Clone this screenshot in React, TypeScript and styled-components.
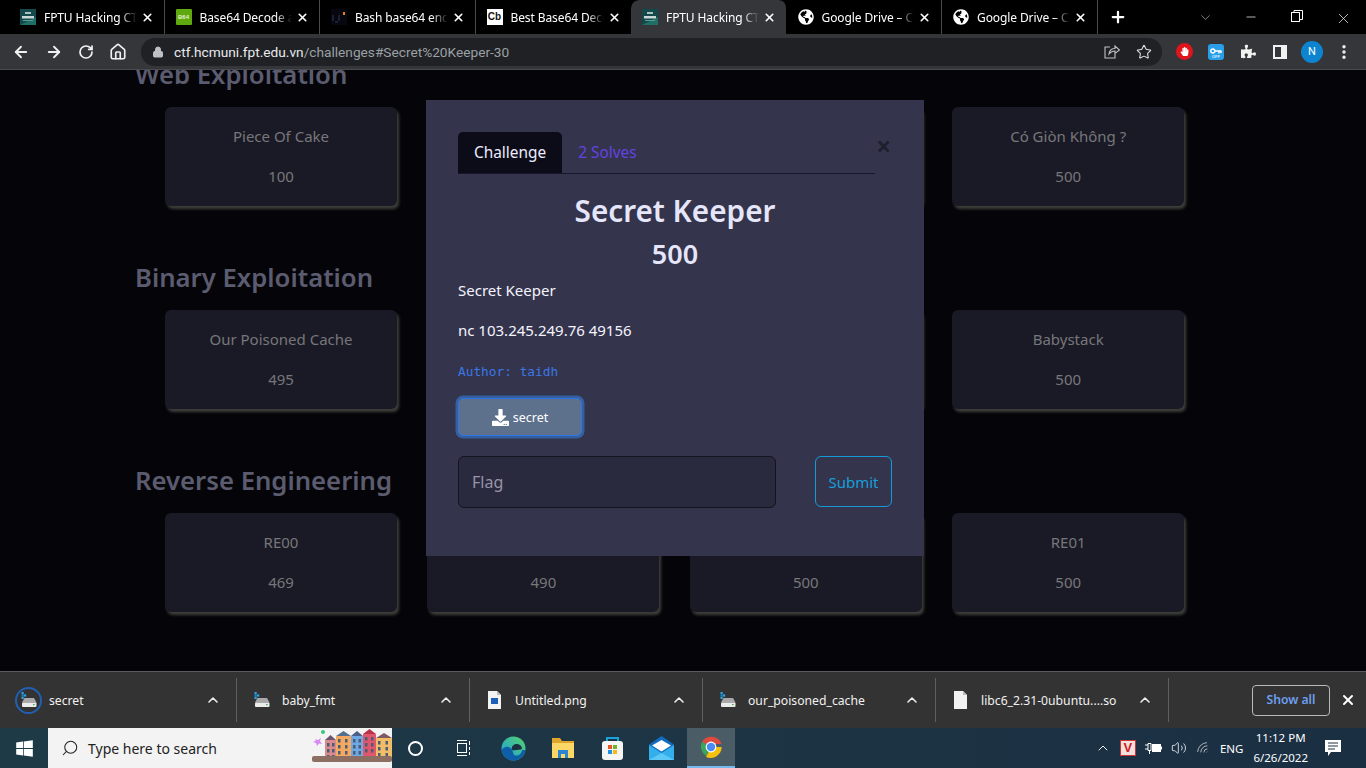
import React from "react";
import styled, { createGlobalStyle } from "styled-components";
import {
  ArrowLeft,
  ArrowRight,
  RotateCw,
  Home,
  Lock,
  Star,
  X,
  Plus,
  ChevronDown,
  ChevronUp,
  Minus,
  MoreVertical,
  Search,
  Volume2,
  Wifi,
} from "lucide-react";
import { FaDownload, FaGlobeAmericas, FaPuzzlePiece, FaWindows, FaHandPaper } from "react-icons/fa";

const uiFont = `"Noto Sans", "Open Sans", sans-serif`;

const GlobalStyle = createGlobalStyle`
  html, body {
    margin: 0;
    padding: 0;
    height: 100%;
    overflow: hidden;
    background: #050509;
    font-family: ${uiFont};
  }
  * { box-sizing: border-box; }
`;

const TabIcon: React.FC<{ kind: string }> = ({ kind }) => {
  if (kind === "ctf") {
    return (
      <svg width="16" height="16" viewBox="0 0 16 16">
        <rect width="16" height="16" fill="#14494c" />
        <path d="M0 16L16 8v8z" fill="#1f6f66" />
        <rect x="5" y="3" width="6" height="2" fill="#aebfc0" />
        <rect x="2" y="7" width="12" height="2.5" fill="#c9d6d6" />
        <rect x="3" y="11" width="10" height="1" fill="#5c9b94" />
      </svg>
    );
  }
  if (kind === "b64") {
    return <B64>B64</B64>;
  }
  if (kind === "bash") {
    return (
      <svg width="16" height="16" viewBox="0 0 16 16">
        <rect width="16" height="16" fill="#07070f" />
        <path d="M2 6v6M8 6v6M4 13h3" stroke="#252a45" strokeWidth="1.5" />
        <rect x="12" y="3" width="2" height="3" fill="#e8782a" />
      </svg>
    );
  }
  if (kind === "cb") {
    return <Cb>Cb</Cb>;
  }
  return <FaGlobeAmericas size={16} color="#fff" />;
};

const tabs = [
  { icon: "ctf", title: "FPTU Hacking CTF" },
  { icon: "b64", title: "Base64 Decode and Encode" },
  { icon: "bash", title: "Bash base64 encode" },
  { icon: "cb", title: "Best Base64 Decode" },
  { icon: "ctf", title: "FPTU Hacking CTF", active: true },
  { icon: "globe", title: "Google Drive – Cloud" },
  { icon: "globe", title: "Google Drive – Cloud" },
];

const sections = [
  {
    name: "Web Exploitation",
    cards: [
      { title: "Piece Of Cake", points: "100" },
      { title: "", points: "" },
      { title: "", points: "" },
      { title: "Có Giòn Không ?", points: "500" },
    ],
  },
  {
    name: "Binary Exploitation",
    cards: [
      { title: "Our Poisoned Cache", points: "495" },
      { title: "", points: "" },
      { title: "", points: "" },
      { title: "Babystack", points: "500" },
    ],
  },
  {
    name: "Reverse Engineering",
    cards: [
      { title: "RE00", points: "469" },
      { title: "", points: "490" },
      { title: "", points: "500" },
      { title: "RE01", points: "500" },
    ],
  },
];

const downloads = [
  { name: "secret", kind: "bin", progress: true },
  { name: "baby_fmt", kind: "bin" },
  { name: "Untitled.png", kind: "png" },
  { name: "our_poisoned_cache", kind: "bin" },
  { name: "libc6_2.31-0ubuntu....so", kind: "file" },
];

const FileIcon: React.FC<{ kind: string }> = ({ kind }) => {
  if (kind === "bin") {
    return (
      <svg width="16" height="16" viewBox="0 0 16 16">
        <rect x="0.5" y="0" width="2.2" height="2.2" fill="#29a8e8" />
        <rect x="3" y="2.4" width="2.2" height="2.2" fill="#29a8e8" />
        <rect x="0.5" y="2.4" width="2.2" height="2.2" fill="#1d86c8" />
        <rect x="0.5" y="4.8" width="2.2" height="2.2" fill="#29a8e8" />
        <path d="M3.5 6h9.5l2.5 4.5H1z" fill="#a9a9a9" />
        <rect x="1" y="10.5" width="14.5" height="4.5" rx="1" fill="#ececec" />
        <rect x="12" y="12" width="1.6" height="1.2" fill="#37b24d" />
      </svg>
    );
  }
  return (
    <svg width="13" height="18" viewBox="0 0 13 18">
      <path d="M0 0h9l4 4v14H0z" fill="#f2f2f2" />
      <path d="M9 0l4 4H9z" fill="#bbb" />
      {kind === "png" && <rect x="3" y="7" width="7" height="6" fill="#1d5fb8" />}
    </svg>
  );
};

const houses = [
  { x: 13, w: 11, top: 12, fill: "#d98a8c", roof: "#6d5570" },
  { x: 24, w: 15, top: 8, fill: "#f4a860", roof: "#54708c" },
  { x: 39, w: 12, top: 8, fill: "#6fa9e4", roof: "#4b5f88" },
  { x: 51, w: 13, top: 6, fill: "#e0566c", roof: "#b83248" },
  { x: 64, w: 16, top: 10, fill: "#f2bd68", roof: "#7d5a64" },
];

const SearchIllustration: React.FC = () => (
  <svg width="80" height="40" viewBox="0 0 80 40">
    <circle cx="11" cy="4" r="2" fill="#35c77e" />
    <path d="M3 11l3 1 3-2-1 3 2 3-3-.5-2 2.5-1-3-3-1 3-1.5z" fill="#d78af0" />
    {houses.map((h) => (
      <g key={h.x}>
        <rect x={h.x} y={h.top} width={h.w} height={29 - h.top} fill={h.fill} />
        <path d={`M${h.x} ${h.top}l${h.w / 2} -5 ${h.w / 2} 5z`} fill={h.roof} />
        {[0, 1, 2].map((row) =>
          [0, 1].map((col) => (
            <rect
              key={`${row}-${col}`}
              x={h.x + 2 + col * (h.w / 2 - 0.5)}
              y={h.top + 3 + row * 6}
              width="2.5"
              height="3.5"
              fill="#4a5d74"
            />
          )),
        )}
      </g>
    ))}
    <rect x="0" y="28" width="80" height="6" rx="2" fill="#8c6e62" />
  </svg>
);

const App: React.FC = () => {
  return (
    <Screen>
      <GlobalStyle />
      <TabStrip>
        {tabs.map((tab, i) => (
          <Tab key={i} $active={!!tab.active}>
            <TabIconBox>
              <TabIcon kind={tab.icon} />
            </TabIconBox>
            <TabTitle>{tab.title}</TabTitle>
            <X size={13} strokeWidth={3} color="#fff" />
          </Tab>
        ))}
        <NewTab>
          <Plus size={18} strokeWidth={3} color="#fff" />
        </NewTab>
        <WindowControls>
          <WindowButton>
            <ChevronDown size={15} strokeWidth={1} color="#ccc" />
          </WindowButton>
          <WindowButton>
            <Minus size={14} strokeWidth={1.2} color="#fff" />
          </WindowButton>
          <WindowButton>
            <svg width="12" height="12" viewBox="0 0 12 12" fill="none" stroke="#fff">
              <rect x="0.5" y="2.5" width="8" height="9" />
              <path d="M3 2.5V.5h8.5v9H8.5" />
            </svg>
          </WindowButton>
          <WindowButton>
            <X size={17} strokeWidth={1} color="#fff" />
          </WindowButton>
        </WindowControls>
      </TabStrip>

      <Toolbar>
        <NavIcons>
          <ArrowLeft size={18} strokeWidth={2.4} color="#f1f1f1" />
          <ArrowRight size={18} strokeWidth={2.4} color="#f1f1f1" />
          <RotateCw size={16} strokeWidth={2.6} color="#f1f1f1" />
          <Home size={18} strokeWidth={2.2} color="#f1f1f1" />
        </NavIcons>
        <Omnibox>
          <Lock size={12} color="#bdc1c6" fill="#bdc1c6" />
          <Url>
            ctf.hcmuni.fpt.edu.vn<UrlRest>/challenges#Secret%20Keeper-30</UrlRest>
          </Url>
          <OmniActions>
            <svg width="16" height="15" viewBox="0 0 16 15" fill="none" stroke="#bdc1c6" strokeWidth="1.1">
              <path d="M6 3H1v11h10v-4" />
              <path d="M5 10c.5-4 3-5.5 6-5.5V2l4.5 4L11 9.500V7C8.500 7 6.500 8 5 10z" />
            </svg>
            <Star size={16} strokeWidth={1.6} color="#e0e0e0" />
          </OmniActions>
        </Omnibox>
        <Extensions>
          <StopSign>
            <FaHandPaper size={9} color="#fff" />
          </StopSign>
          <KeyBadge>
            <svg width="12" height="6" viewBox="0 0 12 6" fill="none" stroke="#fff" strokeWidth="1.4">
              <circle cx="2.800" cy="3" r="2" />
              <path d="M5 3h6.500M9 3v2.500M11 3v2" />
            </svg>
            <KeyLabel>OFF</KeyLabel>
          </KeyBadge>
          <FaPuzzlePiece size={15} color="#f1f1f1" />
          <SidePanelIcon />
          <Avatar>N</Avatar>
          <MoreVertical size={18} strokeWidth={2.6} color="#f1f1f1" />
        </Extensions>
      </Toolbar>

      <Page>
        <Board>
          {sections.map((section) => (
            <Section key={section.name}>
              <SectionTitle>{section.name}</SectionTitle>
              <CardGrid>
                {section.cards.map((card, i) => (
                  <Card key={i}>
                    <CardTitle>{card.title}</CardTitle>
                    <CardPoints>{card.points}</CardPoints>
                  </Card>
                ))}
              </CardGrid>
            </Section>
          ))}
        </Board>

        <Modal>
          <CloseMark>×</CloseMark>
          <ModalTabs>
            <ModalTab $active>Challenge</ModalTab>
            <ModalTab>2 Solves</ModalTab>
          </ModalTabs>
          <ChallengeName>Secret Keeper</ChallengeName>
          <ChallengeValue>500</ChallengeValue>
          <Description>Secret Keeper</Description>
          <Description>nc 103.245.249.76 49156</Description>
          <Author>Author: taidh</Author>
          <FileButton>
            <FaDownload size={17} />
            secret
          </FileButton>
          <FlagRow>
            <FlagInput placeholder="Flag" />
            <SubmitButton>Submit</SubmitButton>
          </FlagRow>
        </Modal>
      </Page>

      <DownloadBar>
        {downloads.map((d) => (
          <DownloadItem key={d.name}>
            <DownloadIcon $progress={!!d.progress}>
              <FileIcon kind={d.kind} />
            </DownloadIcon>
            <DownloadName>{d.name}</DownloadName>
            <ChevronUp size={16} strokeWidth={2.4} color="#eee" />
          </DownloadItem>
        ))}
        <DownloadEnd>
          <ShowAll>Show all</ShowAll>
          <X size={16} strokeWidth={3} color="#fff" />
        </DownloadEnd>
      </DownloadBar>

      <Taskbar>
        <StartButton>
          <FaWindows size={19} color="#fff" />
        </StartButton>
        <SearchBox>
          <Search size={18} strokeWidth={1.4} color="#222" style={{ transform: "scaleX(-1)" }} />
          <SearchText>Type here to search</SearchText>
          <SearchArt>
            <SearchIllustration />
          </SearchArt>
        </SearchBox>
        <CortanaApp>
          <CortanaRing />
        </CortanaApp>
        <PinnedApp>
          <svg width="18" height="18" viewBox="0 0 18 18" fill="none" stroke="#fff">
            <rect x="2.5" y="4.500" width="9" height="9" />
            <path d="M2 1.500h10M2 16.500h10M14.500 2v4M14.500 8v3M14.500 13v3" />
          </svg>
        </PinnedApp>
        <PinnedApp>
          <svg width="25" height="25" viewBox="0 0 25 25">
            <defs>
              <linearGradient id="edgeTop" x1="0" y1="1" x2="1" y2="0">
                <stop offset="0" stopColor="#1b9de2" />
                <stop offset="1" stopColor="#56d36c" />
              </linearGradient>
            </defs>
            <circle cx="12.500" cy="12.500" r="12" fill="url(#edgeTop)" />
            <path d="M24.500 14c-1 6-6 10.500-12 10.500C6 24.500 2 20 .6 14c3-4 8-4 10-1 2 3 1 6 4 6.500 3 .5 6-2 6.500-5.500z" fill="#0f5fa8" />
            <path d="M11 14c-1-4 2-6.500 5.500-6 3 .5 4.500 2.500 4.500 5-2 1-7 1.500-10 1z" fill="#1d3240" />
          </svg>
        </PinnedApp>
        <PinnedApp>
          <svg width="24" height="22" viewBox="0 0 24 22">
            <path d="M1 1h8l2 3h12v16H1z" fill="#e0a62c" />
            <rect x="1" y="6" width="22" height="15" fill="#fad766" />
            <path d="M7 13h10v8h-3v-4h-4v4H7z" fill="#2a86d1" />
          </svg>
        </PinnedApp>
        <PinnedApp>
          <svg width="23" height="25" viewBox="0 0 23 25">
            <path d="M6 7V2h11v5" fill="none" stroke="#19a3d8" strokeWidth="2" />
            <rect x="1" y="5" width="21" height="19" rx="3" fill="#f5f5f5" />
            <rect x="7" y="9" width="4" height="4" fill="#e8562a" />
            <rect x="12" y="9" width="4" height="4" fill="#6fb52c" />
            <rect x="7" y="14" width="4" height="4" fill="#1b93e0" />
            <rect x="12" y="14" width="4" height="4" fill="#f5b81c" />
          </svg>
        </PinnedApp>
        <PinnedApp>
          <svg width="25" height="24" viewBox="0 0 25 24">
            <path d="M0 8.500L12.500 0 25 8.500V24H0z" fill="#0f6cc0" />
            <path d="M3 9.500L12.500 4 22 9.500l-9.500 6z" fill="#fff" />
            <path d="M0 9l12.500 8L25 9v15H0z" fill="#33b0ec" />
            <path d="M0 24l12.500-7L25 24z" fill="#5cc8f5" />
          </svg>
        </PinnedApp>
        <ChromeApp>
          <svg width="24" height="24" viewBox="0 0 24 24">
            <path d="M12 12L3 6.800A11 11 0 0 1 22.600 9H12z" fill="#dd4b3e" />
            <path d="M12 12l-5 8.900A11 11 0 0 1 3 6.800z" fill="#3ca55c" />
            <path d="M12 12h10.600A11 11 0 0 1 7 22z" fill="#f4c20d" />
            <circle cx="12" cy="12" r="5.400" fill="#fff" />
            <circle cx="12" cy="12" r="4.200" fill="#4a8af4" />
          </svg>
        </ChromeApp>
        <Tray>
          <ChevronUp size={16} strokeWidth={1.4} color="#fff" />
          <VBadge>V</VBadge>
          <svg width="17" height="14" viewBox="0 0 17 14" fill="none" stroke="#fff">
            <path d="M0 4h3M0 8h3M3 2.500h3v7H3zM4.500 9.500V13" />
            <rect x="7.500" y="3.500" width="8" height="7" fill="#fff" />
            <path d="M16.500 5.500v3" />
          </svg>
          <Volume2 size={16} strokeWidth={1.2} color="#fff" />
          <Wifi size={15} strokeWidth={1.2} color="#d9d9d9" style={{ transform: "rotate(-45deg)" }} />
          <TrayText>ENG</TrayText>
          <Clock>
            <span>11:12 PM</span>
            <span>6/26/2022</span>
          </Clock>
          <NotifyIcon>
            <svg width="17" height="17" viewBox="0 0 17 17">
              <path d="M0 0h16v12H6l-3 4v-4H0z" fill="#fff" />
              <path d="M3 3h10M3 6h10M3 9h7" stroke="#1d3240" />
            </svg>
          </NotifyIcon>
        </Tray>
      </Taskbar>
    </Screen>
  );
};

export default App;

const Screen = styled.div`
  display: flex;
  flex-direction: column;
  width: 1366px;
  height: 768px;
  overflow: hidden;
`;

const TabStrip = styled.div`
  display: flex;
  align-items: stretch;
  height: 34px;
  padding-left: 9px;
  background: #000;
`;

const Tab = styled.div<{ $active: boolean }>`
  display: flex;
  align-items: center;
  width: 155.5px;
  padding: 0 10px 0 11px;
  background: ${(p) => (p.$active ? "#35363a" : "transparent")};
  border-radius: ${(p) => (p.$active ? "8px 8px 0 0" : "0")};
  border-right: 1px solid ${(p) => (p.$active ? "transparent" : "#4a4a4a")};
  background-clip: padding-box;

  &:nth-child(4) {
    border-right: none;
  }
`;

const TabIconBox = styled.div`
  display: flex;
  flex: none;
  align-items: center;
  justify-content: center;
  width: 16px;
  height: 16px;
  margin-right: 8px;
`;

const Cb = styled.div`
  width: 16px;
  height: 16px;
  background: #fff;
  color: #111;
  font: 700 10px/16px "Liberation Sans", sans-serif;
  text-align: center;
`;

const B64 = styled.div`
  width: 16px;
  height: 16px;
  border-radius: 1px;
  background: #5fa80f;
  color: #e5f2d0;
  font: 700 6px/16px "Liberation Sans", sans-serif;
  text-align: center;
`;

const TabTitle = styled.div`
  flex: 1;
  min-width: 0;
  overflow: hidden;
  white-space: nowrap;
  font-size: 12px;
  letter-spacing: -0.1px;
  color: #fff;
  margin-right: 4px;
  -webkit-mask-image: linear-gradient(to right, #000 82%, transparent 100%);
  mask-image: linear-gradient(to right, #000 82%, transparent 100%);
`;

const NewTab = styled.div`
  display: flex;
  align-items: center;
  justify-content: center;
  width: 41px;
`;

const WindowControls = styled.div`
  display: flex;
  margin-left: auto;
`;

const WindowButton = styled.div`
  display: flex;
  align-items: flex-start;
  justify-content: center;
  width: 46px;
  padding-top: 10px;
`;

const Toolbar = styled.div`
  display: flex;
  align-items: center;
  height: 36px;
  background: #35363a;
  padding: 0 0 0 12px;
  border-bottom: 1px solid #4a4b4e;
`;

const NavIcons = styled.div`
  display: flex;
  align-items: center;
  gap: 15px;
  width: 129px;
`;

const Omnibox = styled.div`
  display: flex;
  align-items: center;
  width: 1021px;
  height: 28px;
  border-radius: 14px;
  padding: 0 10px 0 11px;
  background: #202124;
`;

const Url = styled.div`
  margin-left: 10px;
  font: 13.7px Roboto, sans-serif;
  color: #e8eaed;
  white-space: nowrap;
`;

const UrlRest = styled.span`
  color: #9aa0a6;
`;

const OmniActions = styled.div`
  display: flex;
  align-items: center;
  gap: 16px;
  margin-left: auto;
`;

const Extensions = styled.div`
  display: grid;
  grid-template-columns: repeat(6, 32px);
  align-items: center;
  justify-items: center;
  margin-left: 6px;
`;

const StopSign = styled.div`
  display: flex;
  align-items: center;
  justify-content: center;
  width: 17px;
  height: 17px;
  border-radius: 50%;
  background: #e0141c;
`;

const KeyBadge = styled.div`
  display: flex;
  flex-direction: column;
  align-items: center;
  padding-top: 4px;
  width: 16px;
  height: 16px;
  border-radius: 3px;
  background: #2a9fe8;
`;

const KeyLabel = styled.div`
  color: #d8f0ff;
  font: 700 4px/5px "Liberation Sans", sans-serif;
`;

const SidePanelIcon = styled.div`
  width: 14px;
  height: 14px;
  border: 2px solid #f1f1f1;
  border-right-width: 6px;
`;

const Avatar = styled.div`
  width: 22px;
  height: 22px;
  border-radius: 50%;
  background: #0d84d0;
  color: #fff;
  font: 11px/22px Roboto, sans-serif;
  text-align: center;
`;

const Page = styled.div`
  position: relative;
  flex: 1;
  min-height: 0;
  overflow: hidden;
  background: #050509;
`;

const Board = styled.div`
  display: flex;
  flex-direction: column;
  gap: 55.2px;
  margin-top: -12px;
  padding-left: 135px;
`;

const Section = styled.section`
  display: flex;
  flex-direction: column;
`;

const SectionTitle = styled.h3`
  margin: 0 0 15px;
  height: 34px;
  font-size: 25.7px;
  line-height: 34px;
  font-weight: 600;
  color: #5c5c70;
`;

const CardGrid = styled.div`
  display: grid;
  grid-template-columns: repeat(4, 232px);
  column-gap: 30.4px;
  margin-left: 30px;
`;

const Card = styled.div`
  display: flex;
  flex-direction: column;
  align-items: center;
  height: 99px;
  padding-top: 19px;
  border-radius: 6px;
  background: #1a1a26;
  box-shadow: 2px 3px 3px #3e3e3a;
`;

const CardTitle = styled.div`
  height: 21px;
  font-size: 15px;
  line-height: 21px;
  color: #77777a;
`;

const CardPoints = styled.div`
  margin-top: 19px;
  font-size: 15px;
  line-height: 21px;
  color: #77777a;
`;

const Modal = styled.div`
  position: absolute;
  top: 30px;
  left: 426px;
  width: 498px;
  height: 456px;
  padding: 32px;
  background: #34344c;
  color: #fff;
`;

const CloseMark = styled.div`
  position: absolute;
  top: 29px;
  right: 33px;
  font-size: 26px;
  line-height: 34px;
  font-weight: 700;
  color: #1f1f2e;
`;

const ModalTabs = styled.div`
  display: flex;
  width: 417px;
  height: 42px;
  border-bottom: 1px solid #17172a;
`;

const ModalTab = styled.div<{ $active?: boolean }>`
  display: flex;
  align-items: center;
  padding: 0 16px;
  height: 41px;
  border-radius: 5px 5px 0 0;
  font-size: 15.4px;
  color: ${(p) => (p.$active ? "#ecebff" : "#6244e0")};
  background: ${(p) => (p.$active ? "#0c0c18" : "transparent")};
`;

const ChallengeName = styled.h3`
  margin: 15px 0 0;
  text-align: center;
  font-size: 29.7px;
  line-height: 44px;
  font-weight: 600;
  color: #e6e6fb;
`;

const ChallengeValue = styled.h4`
  margin: 0 0 3px;
  text-align: center;
  font-size: 27px;
  line-height: 42px;
  font-weight: 600;
  color: #e6e6fb;
`;

const Description = styled.p`
  margin: 0 0 16px;
  font-size: 15px;
  line-height: 24px;
  color: #f4f4ff;
`;

const Author = styled.div`
  margin-top: 20px;
  font: 12.8px/20px "DejaVu Sans Mono", monospace;
  color: #3a78e6;
`;

const FileButton = styled.button`
  display: flex;
  align-items: center;
  justify-content: center;
  gap: 4px;
  width: 124px;
  height: 38px;
  margin-top: 16px;
  border: 1.5px solid #2f74e4;
  border-radius: 5px;
  background: #5d708c;
  box-shadow: 0 0 0 2.5px #35609f;
  color: #fff;
  font-family: ${uiFont};
  font-size: 12.5px;
`;

const FlagRow = styled.div`
  display: flex;
  justify-content: space-between;
  width: 434px;
  margin-top: 20px;
`;

const FlagInput = styled.input`
  width: 318px;
  height: 52px;
  padding: 0 13px;
  border: 1px solid #14141f;
  border-radius: 6px;
  background: #2a2a3e;
  font-family: ${uiFont};
  font-size: 16px;
  color: #fff;

  &::placeholder {
    color: #9a93ab;
  }
`;

const SubmitButton = styled.button`
  width: 77px;
  height: 51px;
  padding: 0;
  border: 1px solid #149ad8;
  border-radius: 6px;
  background: transparent;
  color: #169fdc;
  font-family: ${uiFont};
  font-size: 15px;
`;

const DownloadBar = styled.div`
  display: flex;
  align-items: center;
  height: 57px;
  padding-left: 4px;
  background: #333;
  border-top: 1px solid #5c5c5c;
`;

const DownloadItem = styled.div`
  display: flex;
  align-items: center;
  width: 233px;
  height: 44px;
  padding: 0 15px 0 11px;
  border-right: 1px solid #5f5f5f;
  gap: 5px;
`;

const DownloadIcon = styled.div<{ $progress: boolean }>`
  display: flex;
  flex: none;
  align-items: center;
  justify-content: center;
  width: 27px;
  height: 27px;
  border-radius: 50%;
  border: 2px solid ${(p) => (p.$progress ? "#2160b4" : "transparent")};
`;

const DownloadName = styled.div`
  flex: 1;
  margin-left: 2px;
  font-size: 12.2px;
  color: #f1f1f1;
  white-space: nowrap;
`;

const DownloadEnd = styled.div`
  display: flex;
  align-items: center;
  margin-left: auto;
  padding-right: 10px;
  gap: 10px;
`;

const ShowAll = styled.div`
  width: 78px;
  height: 31px;
  border: 1px solid #b9b9b9;
  border-radius: 4px;
  color: #6d9eee;
  font-size: 12.2px;
  font-weight: 600;
  line-height: 27px;
  text-align: center;
`;

const Taskbar = styled.div`
  display: flex;
  align-items: stretch;
  height: 40px;
  background: linear-gradient(to right, #1e3a47, #1b2f42);
`;

const StartButton = styled.div`
  display: flex;
  align-items: center;
  justify-content: center;
  width: 48px;
`;

const SearchBox = styled.div`
  display: flex;
  align-items: center;
  width: 344px;
  padding-left: 13px;
  background: #f3f3f3;
`;

const SearchText = styled.div`
  margin-left: 9px;
  font-size: 14px;
  color: #222;
  white-space: nowrap;
`;

const SearchArt = styled.div`
  display: flex;
  margin-left: auto;
`;

const PinnedApp = styled.div`
  display: flex;
  align-items: center;
  justify-content: center;
  width: 49.5px;
`;

const CortanaApp = styled(PinnedApp)`
  width: 47px;
`;

const ChromeApp = styled(PinnedApp)`
  width: 48px;
  background: #4a5c66;
  border-bottom: 2px solid #76b9ed;
  margin-left: 0;
`;

const CortanaRing = styled.div`
  width: 15px;
  height: 15px;
  border: 2.5px solid #fff;
  border-radius: 50%;
`;

const Tray = styled.div`
  display: flex;
  align-items: center;
  gap: 9px;
  margin-left: auto;
  padding-right: 24px;
  color: #fff;
`;

const VBadge = styled.div`
  width: 16px;
  height: 16px;
  background: #f4e0dc;
  border: 1px solid #c33;
  color: #d01c1c;
  font: 700 13px/14px "Liberation Sans", sans-serif;
  text-align: center;
`;

const TrayText = styled.div`
  font-size: 11.5px;
`;

const Clock = styled.div`
  display: flex;
  flex-direction: column;
  align-items: center;
  margin: 0 8px 0 1px;
  font-size: 11.5px;
  line-height: 20px;
`;

const NotifyIcon = styled.div`
  display: flex;
`;
